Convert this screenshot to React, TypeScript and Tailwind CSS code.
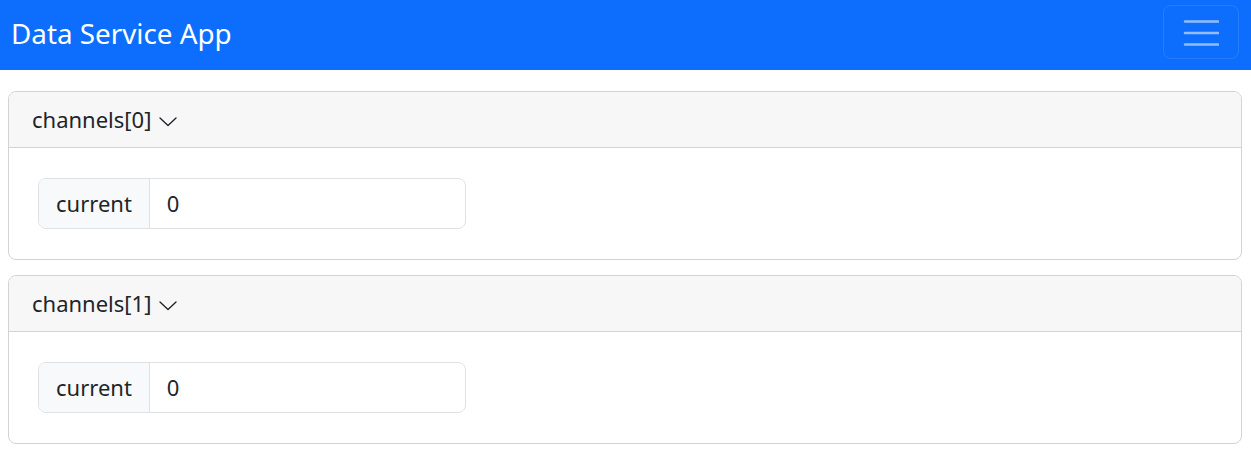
import React from "react";

function Chevron() {
  return (
    <svg width="18" height="10" viewBox="0 0 18 10" className="ml-[8px] mt-[5px]" fill="none">
      <polyline points="1,1 9,8.5 17,1" stroke="#212529" strokeWidth="1.4" strokeLinecap="round" strokeLinejoin="round" />
    </svg>
  );
}

function Card({ title }: { title: string }) {
  return (
    <div className="border border-[#d3d3d3] rounded-[8px] overflow-hidden bg-white">
      <div className="bg-[#f7f7f7] border-b border-[#d3d3d3] px-[23px] py-[11px] leading-[33px] flex items-center">
        <span>{title}</span>
        <Chevron />
      </div>
      <div className="px-[29px] py-[30px]">
        <div className="w-[428px] h-[51px] flex border border-[#dee2e6] rounded-[8px] overflow-hidden">
          <div className="bg-[#f8f9fa] border-r border-[#dee2e6] px-[17px] flex items-center">current</div>
          <div className="pl-[17px] flex items-center">0</div>
        </div>
      </div>
    </div>
  );
}

export default function App() {
  return (
    <div className="font-['Noto_Sans',sans-serif] text-[#212529] text-[22px] bg-white min-h-[452px]">
      <nav className="h-[70px] bg-[#0d6efd] flex items-center justify-between pl-[11px] pr-[12px]">
        <span className="text-white text-[27.8px] leading-[41px] mb-[3px]">Data Service App</span>
        <button className="w-[76px] h-[54px] border border-white/10 rounded-[8px] flex items-center justify-center mb-[6px]">
          <svg width="36" height="30" viewBox="0 0 36 30" fill="none">
            <path d="M2 4.5h33M2 16h33M2 27.5h33" stroke="rgba(255,255,255,0.55)" strokeWidth="2.6" strokeLinecap="round" />
          </svg>
        </button>
      </nav>
      <main className="pl-[8px] pr-[9px] pt-[21px] flex flex-col gap-[14.5px]">
        <Card title="channels[0]" />
        <Card title="channels[1]" />
      </main>
    </div>
  );
}
